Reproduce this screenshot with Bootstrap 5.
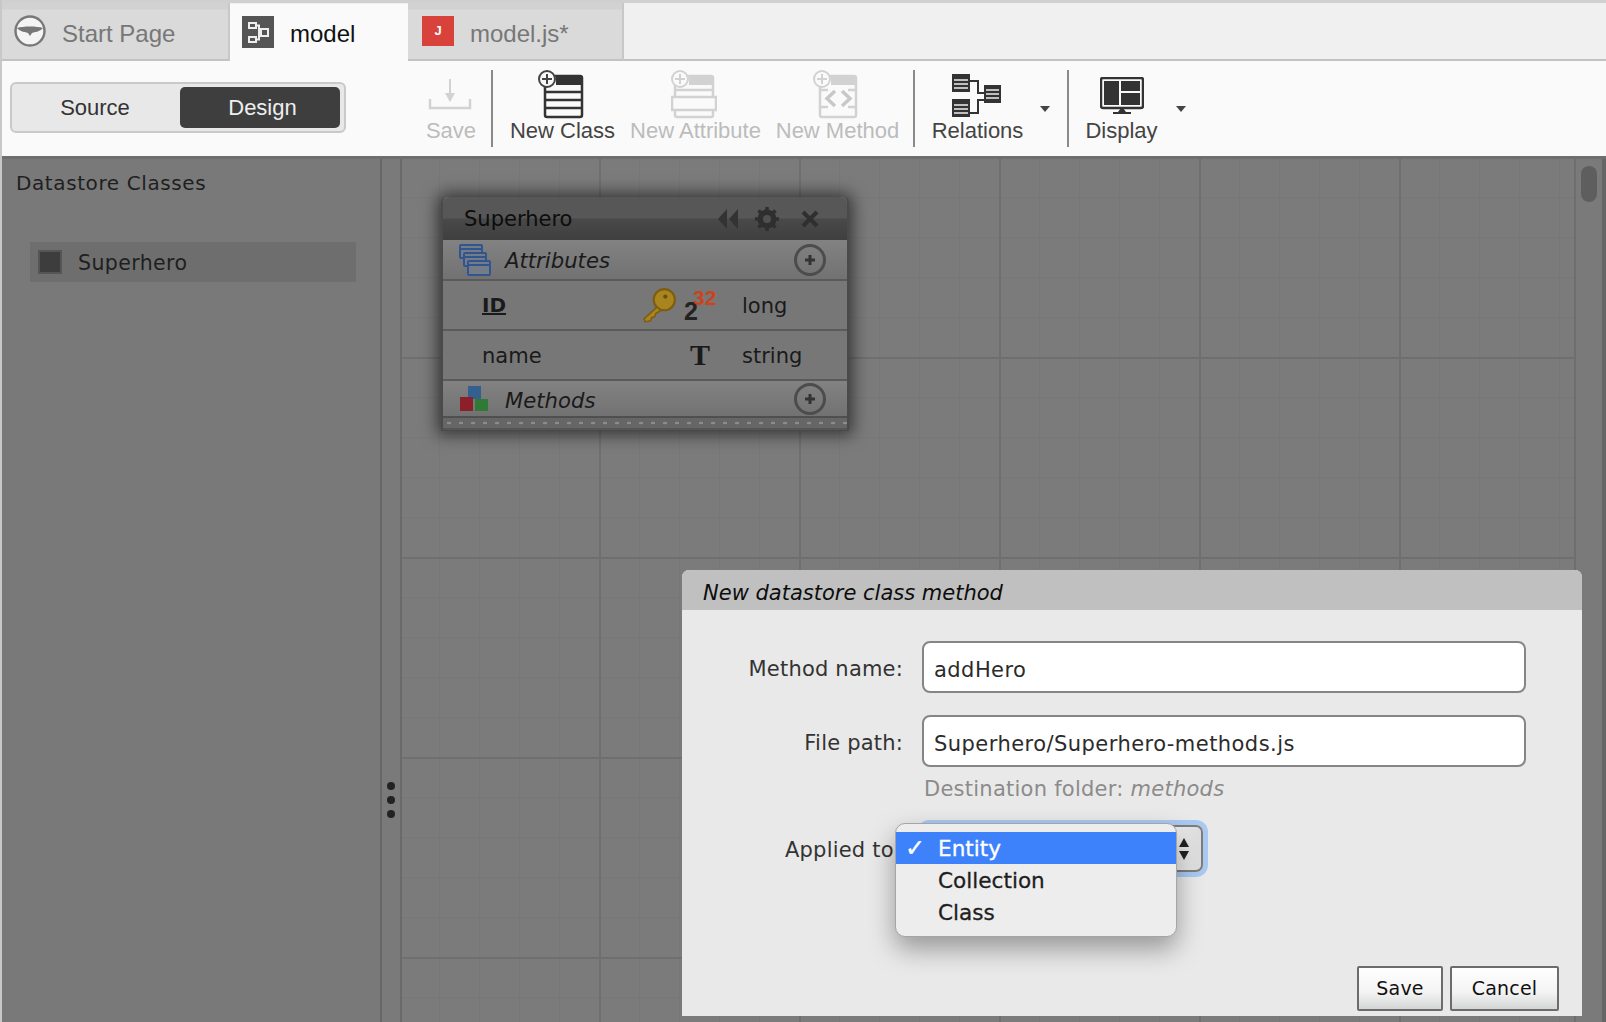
<!DOCTYPE html>
<html lang="en">
<head>
  <meta charset="UTF-8">
  <meta name="viewport" content="width=device-width, initial-scale=1">
  <title>Model designer</title>
  <link href="https://cdn.jsdelivr.net/npm/bootstrap@5.3.3/dist/css/bootstrap.min.css" rel="stylesheet">
  <style>
    html, body { height: 100%; }
    body { overflow: hidden; background: #c8c8c8; padding-left: 2px; font-family: "DejaVu Sans", sans-serif; color: #1e1e1e; }
    .app-shell { height: 1022px; }

    /* tabs */
    .tab-strip { height: 61px; background: #f0f0f0; border-top: 3px solid #d0d0d0; border-bottom: 2px solid #c2c2c2; font-family: "Liberation Sans", Arial, sans-serif; font-size: 24px; flex: none; }
    .doc-tab { height: 58px; margin-bottom: -2px; display: flex; align-items: center; color: #777; background: linear-gradient(#d2d2d2 0, #d2d2d2 6px, #dadada 7px); border-right: 2px solid #c8c8c8; border-bottom: 2px solid #c2c2c2; }
    .doc-tab span { margin-top: 6px; }
    .doc-tab.on { background: #fafafa; color: #111; border: 0; margin-top: 1px; height: 58px; }
    .doc-tab.on span { margin-top: 2px; }
    .doc-tab.on svg { margin-bottom: 2px; }
    .tab-start { width: 228px; padding-left: 12px; gap: 16px; }
    .tab-model { width: 178px; padding-left: 12px; gap: 16px; }
    .tab-js { width: 216px; padding-left: 14px; gap: 16px; }
    .js-badge { width: 32px; height: 30px; background: #d8423a; color: #fff; font-size: 13px; font-weight: 700; display: flex; align-items: center; justify-content: center; }

    /* toolbar */
    .tool-strip { height: 95px; background: #fafafa; font-family: "Liberation Sans", Arial, sans-serif; font-size: 22px; color: #444; flex: none; padding-left: 8px; }
    .mode-switch { width: 336px; height: 51px; margin-top: 21px; background: #e8e8e8; border: 2px solid #c9c9c9; border-radius: 6px; padding: 3px 4px 3px 0; }
    .mode-btn { font-size: 22px; line-height: 1; color: #333; border: 0; padding: 0; height: 41px; border-radius: 5px; font-family: inherit; }
    .mode-source { width: 166px; background: transparent; }
    .mode-design { width: 160px; background: #3e3e3e; color: #eee; padding-left: 5px; }
    .mode-design:hover { background: #3e3e3e; color: #eee; }
    .tool-item { display: flex; flex-direction: column; align-items: center; height: 82px; margin-top: 9px; white-space: nowrap; line-height: 24px; }
    .tool-item svg { flex: none; }
    .tool-icon { height: 49px; display: flex; align-items: flex-start; justify-content: center; }
    .tool-off { color: #bcbcbc; }
    .tool-rule { width: 2px; height: 77px; margin-top: 9px; background: #8a8a8a; flex: none; }
    .tool-caret { width: 0; height: 0; border-left: 5.5px solid transparent; border-right: 5.5px solid transparent; border-top: 6px solid #444; margin-top: 45px; flex: none; }
    .t-save { width: 48px; margin-left: 81px; }
    .t-save svg { margin-top: 5px; margin-left: -2px; }
    .t-class { width: 105px; margin-left: 17px; }
    .t-class svg { margin-left: -4px; }
    .t-attr { width: 131px; margin-left: 15px; }
    .t-attr svg { margin-left: -4px; }
    .t-meth { width: 123px; margin-left: 15px; }
    .t-meth svg { margin-left: -4px; }
    .t-rel { width: 91px; margin-left: 17px; }
    .t-rel svg { margin-left: -2px; }
    .t-disp { width: 71px; margin-left: 17px; }
    .r1 { margin-left: 16px; }
    .r2 { margin-left: 14px; }

    /* main area */
    .work-area { height: 866px; border-top: 3px solid #6e6e6e; position: relative; background: #7a7a7a; }
    .side-panel { width: 380px; background: #797979; border-right: 2px solid #666; flex: none; padding: 8px 14px; }
    .side-title { font-size: 20px; letter-spacing: .6px; color: #1f1f1f; line-height: 32px; }
    .side-row { margin: 43px 0 0 14px; width: 326px; height: 40px; background: #6e6e6e; display: flex; align-items: center; padding-left: 8px; gap: 16px; font-size: 20.5px; letter-spacing: .4px; color: #1f1f1f; }
    .side-row span + span { padding-top: 2px; }
    .side-swatch { width: 24px; height: 24px; background: #3d3d3d; border: 2px solid #555; }
    .split-bar { width: 20px; flex: none; border-right: 2px solid #6a6a6a; position: relative; }
    .grip-dots { position: absolute; left: 5px; top: 623px; display: flex; flex-direction: column; gap: 6px; }
    .grip-dots i { width: 8px; height: 8px; border-radius: 50%; background: #222; }
    .grid-canvas { position: relative; flex: 1 1 auto;
      background-color: #7b7b7b;
      background-image: linear-gradient(#6f6f6f 2px, transparent 2px), linear-gradient(90deg, #6f6f6f 2px, transparent 2px), linear-gradient(#777 1px, transparent 1px), linear-gradient(90deg, #777 1px, transparent 1px);
      background-size: 200px 200px, 200px 200px, 40px 40px, 40px 40px;
      background-position: 0 -2px, -3px 0, 0 -2px, -3px 0; }
    .scroll-track { width: 28px; flex: none; border-left: 2px solid #6e6e6e; padding: 7px 0 0 5px; background: #7a7a7a; }
    .scroll-thumb { width: 16px; height: 36px; border-radius: 8px; background: #5e5e5e; }
    .right-edge { width: 4px; background: #666; flex: none; }

    /* class node */
    .class-node { position: absolute; left: 39px; top: 38px; width: 408px; height: 234px; background: #777; border: 2px solid #4a4a4a; border-top: 0; border-radius: 6px 6px 0 0; box-shadow: 0 0 16px 4px rgba(0,0,0,.55); color: #1a1a1a; font-size: 21px; }
    .node-head { height: 43px; border-radius: 6px 6px 0 0; background: linear-gradient(#575757 0, #575757 21px, #494949 22px, #3f3f3f 100%); display: flex; align-items: center; padding-left: 21px; color: #0d0d0d; }
    .node-head > span { padding-top: 2px; }
    .node-head-tools { margin-left: auto; margin-right: 27px; gap: 14px; }
    .node-section { height: 41px; display: flex; align-items: center; background: linear-gradient(#828282, #727272); border-bottom: 2px solid #5a5a5a; padding-left: 16px; font-style: italic; }
    .node-section.meth { height: 37px; border-bottom: 2px solid #4f4f4f; }
    .section-label { margin-left: 14px; padding-top: 3px; font-size: 21.2px; }
    .meth .section-label { padding-top: 5px; }
    .add-round { margin-left: auto; margin-right: 21px; margin-top: 1px; width: 32px; height: 32px; border-radius: 50%; border: 3px solid #4c4c4c; display: flex; align-items: center; justify-content: center; }
    .node-row { height: 50px; display: flex; align-items: center; border-bottom: 2px solid #5a5a5a; background: #777; position: relative; }
    .attr-name { margin-left: 39px; padding-top: 3px; }
    .attr-id { font-weight: 700; text-decoration: underline; font-size: 20px; padding-top: 0; }
    .attr-type { position: absolute; left: 299px; top: 10px; }
    .type-t { position: absolute; left: 247px; top: 9px; font-family: "Liberation Serif", serif; font-weight: 700; font-size: 30px; line-height: 1; }
    .key-mark { position: absolute; left: 198px; top: 6px; }
    .pow-mark { position: absolute; left: 241px; top: 6px; font-family: "Liberation Sans", Arial, sans-serif; font-weight: 700; font-size: 25px; line-height: 1; width: 38px; height: 36px; }
    .pow-base { position: absolute; left: 0; top: 12px; color: #222; }
    .pow-exp { position: absolute; left: 9px; top: 0; color: #c9431c; font-size: 21px; }
    .node-foot { height: 12px; border-bottom: 2px solid #555; background-color: #666; background-image: radial-gradient(#8c8c8c 1.7px, transparent 1.9px); background-size: 12px 10px; background-position: 0 0; }

    /* dialog */
    .method-dialog { position: absolute; right: 24px; bottom: 6px; width: 900px; height: 446px; background: #e9e9e9; border-radius: 7px 7px 0 0; z-index: 5; display: flex; flex-direction: column; color: #2b2b2b; }
    .dialog-head { height: 40px; background: #c0c0c0; border-radius: 7px 7px 0 0; padding-left: 21px; font-style: italic; font-size: 21px; line-height: 46px; color: #0d0d0d; flex: none; }
    .dialog-form { padding-top: 31px; flex: 1 1 auto; }
    .form-line { display: flex; align-items: center; gap: 19px; margin-bottom: 22px; font-size: 21px; }
    .form-tag { width: 221px; text-align: right; flex: none; white-space: nowrap; letter-spacing: .2px; color: #333; padding-top: 5px; }
    .text-box { width: 604px; height: 52px; border: 2px solid #858585; border-radius: 8px; font-size: 21px; padding: 5px 10px 0; color: #2b2b2b; font-family: inherit; letter-spacing: .45px; }
    .form-note { margin: -16px 0 0 242px; color: #8b8b8b; font-size: 21px; line-height: 32px; letter-spacing: .25px; }
    .apply-line { position: relative; margin-top: 20px; margin-bottom: 0; }
    .apply-line .form-tag { padding-right: 2px; }
    .select-box { width: 281px; height: 47px; border: 2px solid #7d7d7d; border-radius: 7px; background: linear-gradient(90deg, #fafafa 85%, #dcdcdc); box-shadow: 0 0 0 5px #a9c9f2; display: flex; align-items: center; justify-content: flex-end; padding-right: 11px; }
    .select-pop { position: absolute; left: 213px; top: -2px; width: 282px; height: 114px; margin: 0; padding: 8px 0 0; min-width: 0; background: #ededed; border: 1px solid #a5a5a5; border-radius: 10px; box-shadow: 0 12px 26px rgba(0,0,0,.35); display: block; z-index: 6; list-style: none; font-size: 21.6px; color: #1e1e1e; -webkit-text-stroke: .3px currentColor; }
    .select-opt { height: 32px; line-height: 34px; padding: 0 0 0 42px; position: relative; }
    .select-opt.picked { background: #3e82fb; color: #fff; }
    .tick { position: absolute; left: 9px; top: -1px; font-size: 24px; font-weight: 700; }
    .dialog-foot { padding: 0 23px 5px 0; gap: 7px; flex: none; }
    .plain-btn { height: 45px; border: 2px solid #6c6c6c; border-radius: 2px; background: linear-gradient(#ffffff, #f3f3f3 60%, #d4d6d6); font-size: 19px; letter-spacing: .2px; padding: 0; color: #111; font-family: inherit; }
    .plain-btn:hover { border-color: #6c6c6c; background: linear-gradient(#ffffff, #f3f3f3 60%, #d4d6d6); color: #111; }
    .b-save { width: 86px; }
    .b-cancel { width: 109px; }
  </style>
</head>
<body>
  <div class="app-shell d-flex flex-column">
    <!-- Tabs -->
    <div class="tab-strip d-flex">
      <div class="doc-tab tab-start">
        <svg width="32" height="32" viewBox="0 0 32 32"><circle cx="16" cy="16" r="14.5" fill="#f4f4f4" stroke="#777" stroke-width="2.4"/><path d="M3 13 C9 11 23 11 29 13 C26 17 20 17 18 18 L16 21 L14 18 C12 17 6 17 3 13 Z" fill="#777"/></svg>
        <span>Start Page</span>
      </div>
      <div class="doc-tab tab-model on">
        <svg width="32" height="32" viewBox="0 0 32 32"><rect width="32" height="32" fill="#555"/><g fill="none" stroke="#eee" stroke-width="2"><rect x="7" y="7" width="7" height="5"/><rect x="7" y="21" width="7" height="5"/><rect x="19" y="13" width="7" height="7"/><path d="M14 9.5h3v14h-3M17 16h2"/></g></svg>
        <span>model</span>
      </div>
      <div class="doc-tab tab-js">
        <div class="js-badge">J</div>
        <span>model.js*</span>
      </div>
    </div>

    <!-- Toolbar -->
    <div class="tool-strip d-flex align-items-start">
      <div class="mode-switch d-flex justify-content-between">
        <button class="btn mode-btn mode-source" type="button">Source</button>
        <button class="btn mode-btn mode-design" type="button">Design</button>
      </div>

      <div class="tool-item tool-off t-save">
        <div class="tool-icon"><svg width="44" height="38" viewBox="0 0 44 38"><path d="M22 4v22" stroke="#d2d2d2" stroke-width="2"/><path d="M17 18l5 9 5-9z" fill="#d2d2d2"/><path d="M2 24v9h40v-9" fill="none" stroke="#d2d2d2" stroke-width="2.5"/></svg></div>
        <span>Save</span>
      </div>
      <div class="tool-rule r1"></div>

      <div class="tool-item t-class">
        <div class="tool-icon"><svg width="46" height="49" viewBox="0 0 46 49"><rect x="7" y="6" width="37" height="41" rx="2" fill="#fafafa" stroke="#333" stroke-width="2.5"/><rect x="18" y="6" width="26" height="9" fill="#333"/><path d="M7 22h37M7 30h37M7 38h37" stroke="#333" stroke-width="2.5"/><circle cx="9" cy="9" r="8" fill="#fafafa" stroke="#444" stroke-width="2"/><path d="M9 4v10M4 9h10" stroke="#444" stroke-width="2"/></svg></div>
        <span>New Class</span>
      </div>
      <div class="tool-item tool-off t-attr">
        <div class="tool-icon"><svg width="46" height="49" viewBox="0 0 46 49"><rect x="4" y="6" width="38" height="41" rx="2" fill="#fafafa" stroke="#d2d2d2" stroke-width="2.5"/><rect x="18" y="6" width="24" height="9" fill="#d2d2d2"/><rect x="1" y="27" width="44" height="13" fill="#fafafa" stroke="#d2d2d2" stroke-width="2.5"/><path d="M4 20h38" stroke="#d2d2d2" stroke-width="2.5"/><circle cx="9" cy="9" r="8" fill="#fafafa" stroke="#d2d2d2" stroke-width="2"/><path d="M9 4v10M4 9h10" stroke="#d2d2d2" stroke-width="2"/></svg></div>
        <span>New Attribute</span>
      </div>
      <div class="tool-item tool-off t-meth">
        <div class="tool-icon"><svg width="46" height="49" viewBox="0 0 46 49"><rect x="7" y="6" width="36" height="41" rx="2" fill="#fafafa" stroke="#d2d2d2" stroke-width="2.5"/><rect x="18" y="6" width="25" height="9" fill="#d2d2d2"/><path d="M7 20h8M35 20h8M7 37h8M35 37h8" stroke="#d2d2d2" stroke-width="2.5"/><path d="M22 21l-8 7.500 8 7.500M29 21l8 7.500-8 7.500" fill="none" stroke="#c8c8c8" stroke-width="3.500"/><circle cx="9" cy="9" r="8" fill="#fafafa" stroke="#d2d2d2" stroke-width="2"/><path d="M9 4v10M4 9h10" stroke="#d2d2d2" stroke-width="2"/></svg></div>
        <span>New Method</span>
      </div>
      <div class="tool-rule r2"></div>

      <div class="tool-item t-rel">
        <div class="tool-icon"><svg width="50" height="44" viewBox="0 0 50 44" style="margin-top:4px"><g fill="#333"><rect x="0" y="0" width="18" height="18"/><rect x="0" y="25" width="18" height="18"/><rect x="32" y="11" width="17" height="18"/></g><path d="M2 6h14M2 10h14M2 14h14M2 31h14M2 35h14M2 39h14M34 16h13M34 20h13M34 24h13" stroke="#eee" stroke-width="1.500"/><path d="M18 7h8v12h6M18 39h8V26h6" fill="none" stroke="#333" stroke-width="2"/></svg></div>
        <span>Relations</span>
      </div>
      <div class="tool-caret" style="margin-left:17px"></div>
      <div class="tool-rule" style="margin-left:17px"></div>

      <div class="tool-item t-disp">
        <div class="tool-icon"><svg width="44" height="40" viewBox="0 0 44 40" style="margin-top:7px"><rect x="1" y="1" width="42" height="30" rx="2" fill="#fafafa" stroke="#333" stroke-width="2.500"/><g fill="#333"><rect x="4" y="4" width="15" height="24"/><rect x="21" y="4" width="19" height="10"/><rect x="21" y="16" width="19" height="12"/></g><path d="M21 31h2l3 4h5v2H13v-2h5z" fill="#333"/></svg></div>
        <span>Display</span>
      </div>
      <div class="tool-caret" style="margin-left:19px"></div>
    </div>

    <!-- Work area -->
    <div class="work-area d-flex flex-grow-1">
      <div class="side-panel">
        <div class="side-title">Datastore Classes</div>
        <div class="side-row"><span class="side-swatch"></span><span>Superhero</span></div>
      </div>
      <div class="split-bar"><div class="grip-dots"><i></i><i></i><i></i></div></div>

      <div class="grid-canvas">
        <div class="class-node">
          <div class="node-head">
            <span>Superhero</span>
            <div class="node-head-tools d-flex align-items-center">
              <svg width="24" height="24" viewBox="0 0 24 24"><path d="M11 2L2 12l9 10zM22 2l-9 10 9 10z" fill="#333"/></svg>
              <svg width="26" height="26" viewBox="0 0 26 26"><circle cx="13" cy="13" r="7" fill="none" stroke="#2f2f2f" stroke-width="5"/><path d="M13 1v24M1 13h24M4.500 4.500l17 17M21.500 4.500l-17 17" stroke="#2f2f2f" stroke-width="3.500"/><circle cx="13" cy="13" r="4" fill="#505050"/></svg>
              <svg width="20" height="20" viewBox="0 0 20 20" style="margin-left:6px"><path d="M3 3l14 14M17 3L3 17" stroke="#2f2f2f" stroke-width="4"/></svg>
            </div>
          </div>
          <div class="node-section">
            <svg width="32" height="32" viewBox="0 0 32 32"><g fill="#747c88" stroke="#33558f" stroke-width="2"><rect x="1" y="1" width="22" height="13" rx="1"/><rect x="5" y="9" width="22" height="13" rx="1"/><rect x="9" y="17" width="22" height="14" rx="1"/></g><path d="M1 5h22M5 13h22M9 21h22" stroke="#33558f" stroke-width="2"/></svg>
            <span class="section-label">Attributes</span>
            <span class="add-round"><svg width="12" height="12" viewBox="0 0 12 12"><path d="M6 1v10M1 6h10" stroke="#333" stroke-width="3"/></svg></span>
          </div>
          <div class="node-row">
            <span class="attr-name attr-id">ID</span>
            <svg class="key-mark" width="36" height="36" viewBox="0 0 34 34"><circle cx="22" cy="12" r="10" fill="#a98520" stroke="#7d5d10" stroke-width="2"/><circle cx="23" cy="9" r="2" fill="#6a4f10"/><path d="M15 19L3 30l1 3 5-1 1-3 3-1 1-3 5-3z" fill="#a98520" stroke="#7d5d10" stroke-width="1.500"/></svg>
            <span class="pow-mark"><span class="pow-base">2</span><span class="pow-exp">32</span></span>
            <span class="attr-type">long</span>
          </div>
          <div class="node-row">
            <span class="attr-name">name</span>
            <span class="type-t">T</span>
            <span class="attr-type">string</span>
          </div>
          <div class="node-section meth">
            <svg width="30" height="28" viewBox="0 0 30 28"><rect x="9" y="1" width="13" height="13" fill="#33608f"/><rect x="1" y="12" width="13" height="14" fill="#8c1f2a"/><rect x="16" y="14" width="13" height="12" fill="#2f7a35"/></svg>
            <span class="section-label" style="margin-left:16px">Methods</span>
            <span class="add-round"><svg width="12" height="12" viewBox="0 0 12 12"><path d="M6 1v10M1 6h10" stroke="#333" stroke-width="3"/></svg></span>
          </div>
          <div class="node-foot"></div>
        </div>
      </div>

      <div class="scroll-track"><div class="scroll-thumb"></div></div>
      <div class="right-edge"></div>

      <!-- New method dialog -->
      <div class="method-dialog">
        <div class="dialog-head">New datastore class method</div>
        <form class="dialog-form">
          <div class="form-line"><label class="form-tag">Method name:</label><input class="text-box" type="text" value="addHero"></div>
          <div class="form-line"><label class="form-tag">File path:</label><input class="text-box" type="text" value="Superhero/Superhero-methods.js"></div>
          <div class="form-note">Destination folder: <em>methods</em></div>
          <div class="form-line apply-line">
            <label class="form-tag">Applied to:</label>
            <div class="select-box"><svg width="12" height="24" viewBox="0 0 12 24"><path d="M6 1l5 9H1zM6 23l5-9H1z" fill="#222"/></svg></div>
            <ul class="select-pop">
              <li class="select-opt picked"><span class="tick">✓</span>Entity</li>
              <li class="select-opt">Collection</li>
              <li class="select-opt">Class</li>
            </ul>
          </div>
        </form>
        <div class="dialog-foot d-flex justify-content-end">
          <button class="btn plain-btn b-save" type="button">Save</button>
          <button class="btn plain-btn b-cancel" type="button">Cancel</button>
        </div>
      </div>
    </div>
  </div>
  <script src="https://cdn.jsdelivr.net/npm/bootstrap@5.3.3/dist/js/bootstrap.bundle.min.js"></script>
</body>
</html>
